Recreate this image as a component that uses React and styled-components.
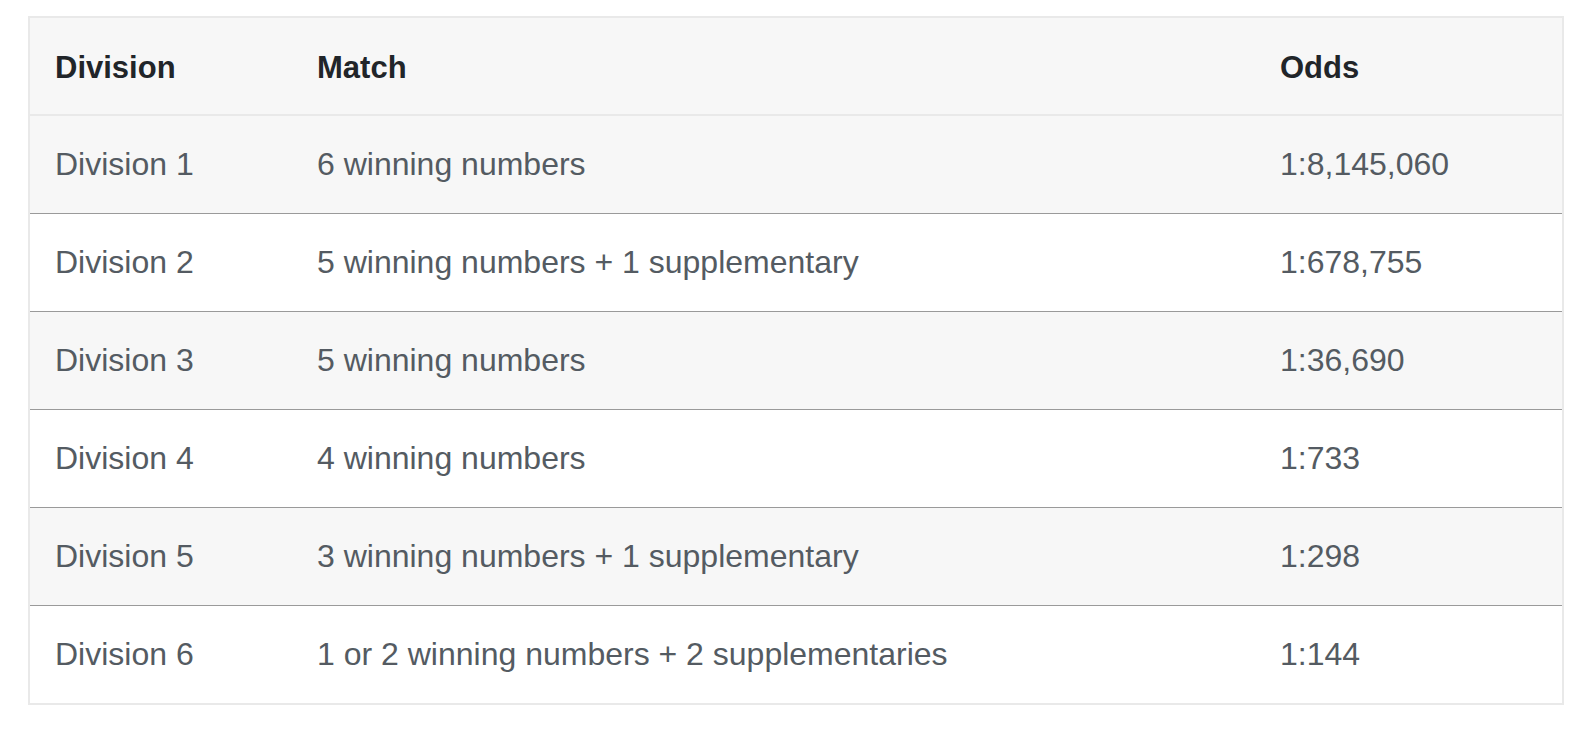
import styled, { createGlobalStyle } from 'styled-components';

const GlobalStyle = createGlobalStyle`
  body {
    margin: 0;
    background: #ffffff;
    font-family: 'Liberation Sans', Arial, sans-serif;
  }
`;

const rows = [
  { division: 'Division 1', match: '6 winning numbers', odds: '1:8,145,060' },
  { division: 'Division 2', match: '5 winning numbers + 1 supplementary', odds: '1:678,755' },
  { division: 'Division 3', match: '5 winning numbers', odds: '1:36,690' },
  { division: 'Division 4', match: '4 winning numbers', odds: '1:733' },
  { division: 'Division 5', match: '3 winning numbers + 1 supplementary', odds: '1:298' },
  { division: 'Division 6', match: '1 or 2 winning numbers + 2 supplementaries', odds: '1:144' },
];

const Page = styled.div`
  padding: 16px 24px 0 28px;
`;

const Table = styled.table`
  width: 100%;
  border-collapse: collapse;
  border: 2px solid #e9e9e9;
  table-layout: fixed;
`;

const HeadRow = styled.tr`
  background: #f7f7f7;
  border-bottom: 2px solid #e9e9e9;
`;

const HeadCell = styled.th`
  box-sizing: border-box;
  width: ${(p) => p.$width || 'auto'};
  height: 98px;
  padding: 4px 0 0 25px;
  text-align: left;
  vertical-align: middle;
  font-size: 31px;
  font-weight: 700;
  color: #212529;
`;

const Row = styled.tr`
  background: ${(p) => (p.$striped ? '#f7f7f7' : '#ffffff')};
  border-bottom: 1px solid #9a9a9a;

  &:last-child {
    border-bottom: none;
  }
`;

const Cell = styled.td`
  height: 97px;
  padding: 0 0 0 25px;
  vertical-align: middle;
  font-size: 32px;
  color: #545b62;
  white-space: nowrap;
`;

export default function App() {
  return (
    <Page>
      <GlobalStyle />
      <Table>
        <thead>
          <HeadRow>
            <HeadCell $width="263px">Division</HeadCell>
            <HeadCell $width="963px">Match</HeadCell>
            <HeadCell>Odds</HeadCell>
          </HeadRow>
        </thead>
        <tbody>
          {rows.map((r, i) => (
            <Row key={r.division} $striped={i % 2 === 0}>
              <Cell>{r.division}</Cell>
              <Cell>{r.match}</Cell>
              <Cell>{r.odds}</Cell>
            </Row>
          ))}
        </tbody>
      </Table>
    </Page>
  );
}
